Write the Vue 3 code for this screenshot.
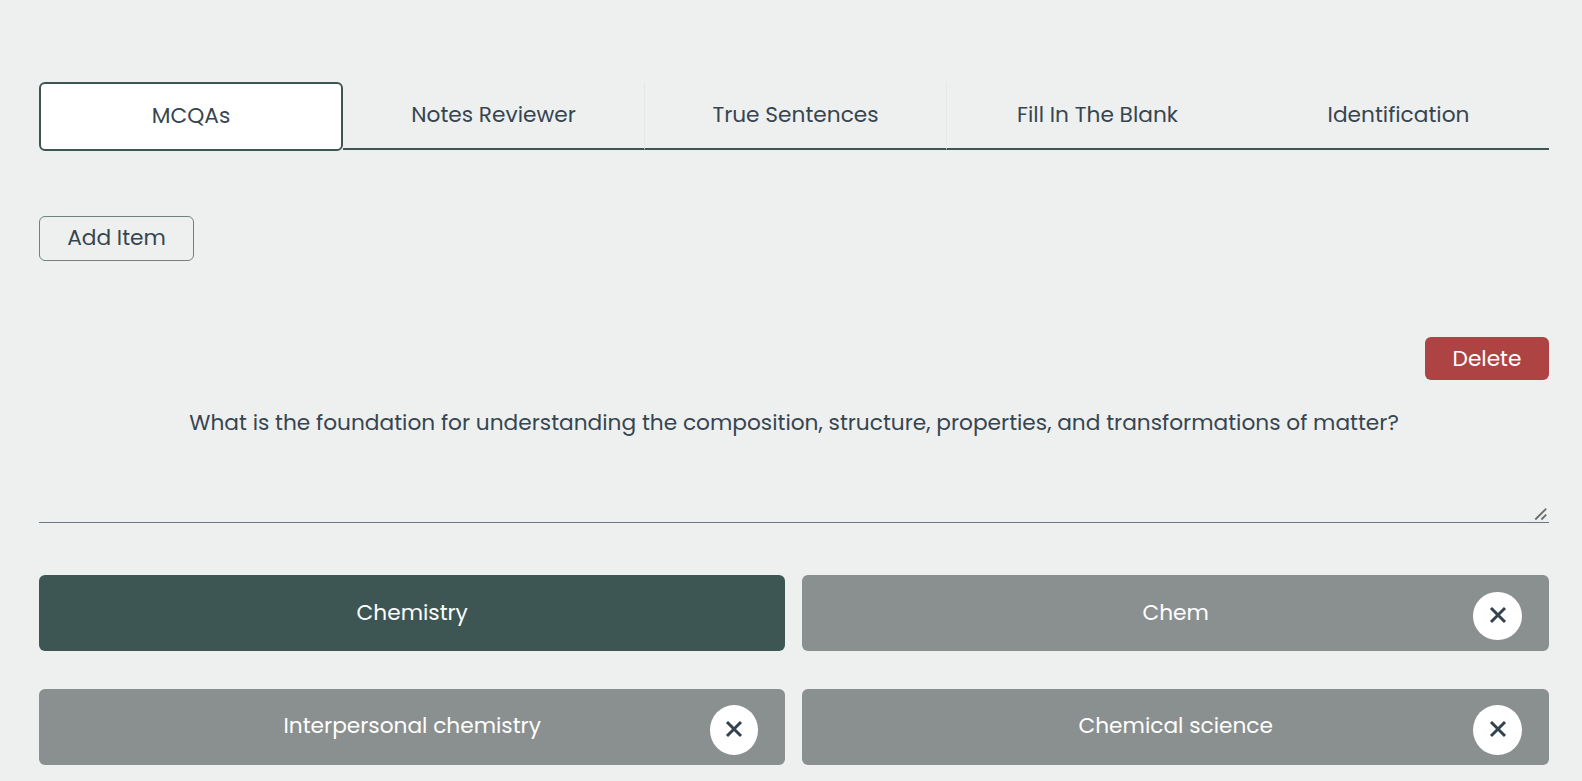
<script setup>
const tabs = [
  { label: 'MCQAs', active: true },
  { label: 'Notes Reviewer' },
  { label: 'True Sentences', divided: true },
  { label: 'Fill In The Blank', divided: true },
  { label: 'Identification' },
]

const options = [
  { label: 'Chemistry', correct: true },
  { label: 'Chem' },
  { label: 'Interpersonal chemistry' },
  { label: 'Chemical science' },
]
</script>

<template>
  <main class="page">
    <nav class="tabs">
      <button
        v-for="tab in tabs"
        :key="tab.label"
        class="tab"
        :class="{ active: tab.active, divided: tab.divided }"
      >
        {{ tab.label }}
      </button>
    </nav>

    <button class="add">Add Item</button>

    <section class="item">
      <button class="delete">Delete</button>
      <div class="question">
        What is the foundation for understanding the composition, structure, properties, and transformations of matter?
        <svg class="grip" viewBox="0 0 14 14">
          <path d="M1.3 12.5 12.2 1.6M7.4 12.5l4.8-4.8" />
        </svg>
      </div>

      <div class="options">
        <div
          v-for="option in options"
          :key="option.label"
          class="option"
          :class="{ correct: option.correct }"
        >
          {{ option.label }}
          <button v-if="!option.correct" class="remove" aria-label="Remove">
            <svg viewBox="0 0 18 18"><path d="M2 2l14 14M16 2 2 16" /></svg>
          </button>
        </div>
      </div>
    </section>
  </main>
</template>

<style>
body {
  background: #eef0f0;
}
</style>

<style scoped>
.page {
  box-sizing: border-box;
  height: 781px;
  padding: 82px 33px 0 39px;
  overflow: hidden;
  background: #eef0f0;
  color: #36454f;
  font-family: Poppins, Inter, "Open Sans", sans-serif;
  font-size: 21.69px;
  line-height: 32px;
}
button {
  box-sizing: border-box;
  margin: 0;
  padding: 0;
  border: 0;
  background: none;
  color: inherit;
  font: inherit;
}
.tabs {
  display: flex;
  align-items: flex-start;
  height: 69px;
}
.tab {
  flex: 1;
  height: 68px;
  padding-bottom: 1px;
  border-bottom: 2px solid #3d5653;
}
.tab.active {
  flex: 0 0 304px;
  height: 69px;
  padding: 0 0 1px;
  border: 2px solid #3d5653;
  border-radius: 6px;
  background: #fff;
}
.tab.divided {
  border-left: 1px solid #e5e7eb;
}
.add {
  display: block;
  width: 155px;
  height: 45px;
  margin-top: 65px;
  padding-bottom: 1px;
  border: 1px solid #6f827f;
  border-radius: 6px;
}
.item {
  display: flex;
  flex-direction: column;
  margin-top: 76px;
}
.delete {
  align-self: flex-end;
  width: 124px;
  height: 43px;
  border-radius: 6px;
  background: #ae4343;
  color: #fff;
}
.question {
  position: relative;
  box-sizing: border-box;
  height: 143px;
  padding-top: 27px;
  border-bottom: 1px solid #6b7680;
  text-align: center;
}
.grip {
  position: absolute;
  right: 1px;
  bottom: 1px;
  width: 14px;
  height: 14px;
  fill: none;
  stroke: #6a6c6d;
  stroke-width: 1.8;
}
.options {
  display: grid;
  grid-template-columns: 746.4px 1fr;
  gap: 38px 17px;
  margin-top: 52px;
}
.option {
  position: relative;
  box-sizing: border-box;
  height: 76px;
  padding-top: 22px;
  border-radius: 6px;
  background: #8a908f;
  color: #fff;
  text-align: center;
}
.option.correct {
  background: #3d5653;
}
.remove {
  position: absolute;
  top: 17px;
  right: 27.3px;
  display: grid;
  place-items: center;
  width: 48.3px;
  height: 48px;
  padding-bottom: 2px;
  border-radius: 50%;
  background: #fff;
}
.option:nth-child(n + 3) {
  padding-top: 21px;
}
.option:nth-child(n + 3) .remove {
  top: 16px;
  height: 50px;
  padding-bottom: 3px;
}
.remove svg {
  width: 18px;
  height: 18px;
  fill: none;
  stroke: #34434f;
  stroke-width: 3;
}
</style>
